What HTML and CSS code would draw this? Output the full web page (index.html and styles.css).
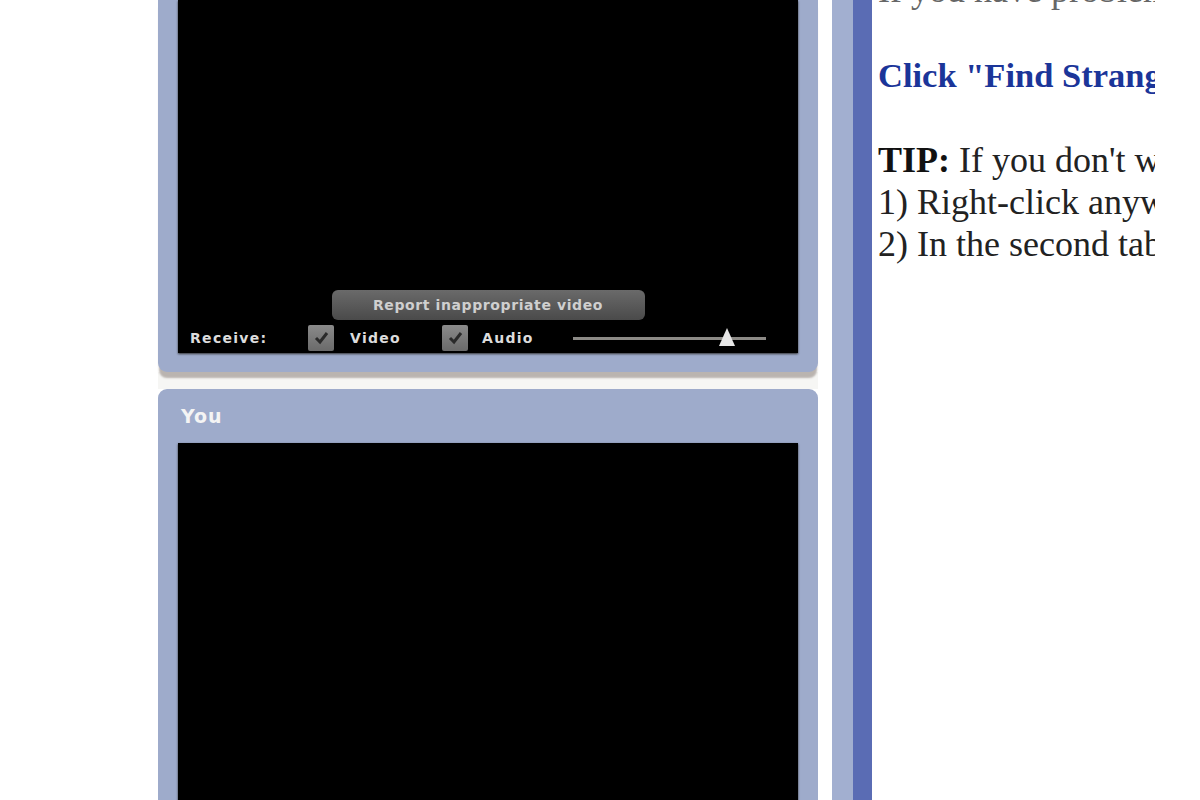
FILE: index.html
```html
<!DOCTYPE html>
<html>
<head>
<meta charset="utf-8">
<link rel="stylesheet" href="styles.css">
</head>
<body>
<div class="page">
  <div class="spacer"></div>
  <div class="videos">
    <div class="panel stranger">
      <div class="screen">
        <div class="report">Report inappropriate video</div>
        <div class="controls">
          <span class="lbl receive">Receive:</span>
          <span class="check c1"><svg viewBox="0 0 26 26" width="26" height="26"><path d="M8 13 L12 17 L19 8" fill="none" stroke="#2a2a2a" stroke-width="3"/></svg></span>
          <span class="lbl video">Video</span>
          <span class="check c2"><svg viewBox="0 0 26 26" width="26" height="26"><path d="M8 13 L12 17 L19 8" fill="none" stroke="#2a2a2a" stroke-width="3"/></svg></span>
          <span class="lbl audio">Audio</span>
          <div class="slider">
            <div class="track"></div>
            <svg class="thumb" viewBox="0 0 18 20" width="18" height="20"><path d="M9 1 L17 19 L1 19 Z" fill="#e6e6e6"/></svg>
          </div>
        </div>
      </div>
    </div>
    <div class="gap"></div>
    <div class="panel you">
      <div class="head">You</div>
      <div class="screen tall"></div>
    </div>
  </div>
  <div class="bar light"></div>
  <div class="bar dark"></div>
  <div class="info">
    <p class="cut">If you have problems, please read the FAQ first.</p>
    <p class="find">Click "Find Stranger" to start chatting</p>
    <p class="tip"><b>TIP:</b> If you don't want the Flash dialog to pop up each time:<br>1) Right-click anywhere on the video<br>2) In the second tab, select "Allow" and "Remember"</p>
  </div>
</div>
</body>
</html>
```

FILE: styles.css
```css
html, body {
  margin: 0;
  padding: 0;
  background: #ffffff;
  overflow: hidden;
}
.page {
  display: flex;
  align-items: flex-start;
  width: 1200px;
  height: 800px;
  overflow: hidden;
}
.spacer {
  width: 158px;
  flex: none;
}
.videos {
  width: 660px;
  flex: none;
  display: flex;
  flex-direction: column;
}
.panel {
  background: #9eabcb;
  padding: 0 20px;
}
.stranger {
  padding-bottom: 19px;
  border-radius: 0 0 9px 9px;
  box-shadow: 0 7px 2px -1px #bab4b0;
  position: relative;
  z-index: 1;
}
.screen {
  background: #000000;
  height: 353px;
  display: flex;
  flex-direction: column;
  align-items: center;
  justify-content: flex-end;
  box-shadow: 0 1px 2px #333;
}
.report {
  width: 313px;
  height: 30px;
  border-radius: 6px;
  background: linear-gradient(#6a6a6a, #4a4a4a);
  color: #cfcfcf;
  font-family: "DejaVu Sans", Verdana, sans-serif;
  font-weight: bold;
  font-size: 14px;
  letter-spacing: 0.6px;
  display: flex;
  align-items: center;
  justify-content: center;
}
.controls {
  align-self: stretch;
  height: 30px;
  margin-top: 3px;
  display: flex;
  align-items: center;
  padding-left: 12px;
}
.lbl {
  color: #dcdcdc;
  font-family: "DejaVu Sans", Verdana, sans-serif;
  font-weight: bold;
  font-size: 14px;
  letter-spacing: 1.3px;
}
.receive { width: 118px; }
.check {
  width: 26px;
  height: 26px;
  background: linear-gradient(#8a8a8a, #6a6a6a);
  border-radius: 2px;
  display: block;
}
.check svg { display: block; }
.video { margin-left: 16px; width: 92px; }
.audio { margin-left: 14px; width: 91px; }
.slider {
  width: 193px;
  height: 26px;
  display: flex;
  align-items: center;
  position: relative;
}
.track {
  width: 100%;
  height: 3px;
  background: #8c8a86;
}
.thumb {
  position: absolute;
  left: 145px;
  top: 2px;
}
.gap {
  height: 17px;
  background: #f6f6f4;
}
.you {
  border-radius: 9px 9px 0 0;
  padding-bottom: 0;
}
.head {
  height: 54px;
  display: flex;
  align-items: center;
  padding-left: 3px;
  color: #f4f4f4;
  font-family: "DejaVu Sans", Verdana, sans-serif;
  font-weight: bold;
  font-size: 19px;
  letter-spacing: 1px;
}
.screen.tall {
  height: 400px;
}
.bar {
  flex: none;
  height: 800px;
}
.bar.light {
  width: 21px;
  margin-left: 14px;
  background: #a2afd0;
}
.bar.dark {
  width: 19px;
  background: #5a6cb4;
}
.info {
  width: 277px;
  margin-left: 6px;
  flex: none;
  overflow: hidden;
  white-space: nowrap;
  font-family: "Liberation Serif", "Times New Roman", serif;
  font-size: 36px;
  line-height: 42px;
  color: #222222;
  margin-top: -31px;
}
.info p { margin: 0; }
.cut { color: #666; }
.find {
  color: #1b3599;
  font-weight: bold;
  font-size: 34.5px;
  margin-top: 43px !important;
}
.tip {
  margin-top: 43px !important;
}
.tip b { color: #111; }
```
